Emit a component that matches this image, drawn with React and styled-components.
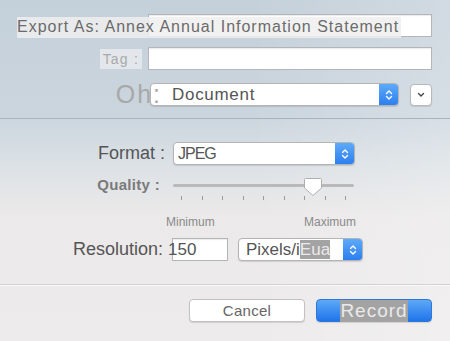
import React from 'react'
import styled, {createGlobalStyle} from 'styled-components'

const Global = createGlobalStyle`
  body {
    margin: 0;
    font-family: "Liberation Sans", Arial, sans-serif;
  }
`

const Dialog = styled.div`
  width: 450px;
  height: 341px;
  overflow: hidden;
  background:
    linear-gradient(to right, rgba(255,255,255,0) 55%, rgba(255,255,255,0.22) 100%),
    linear-gradient(to bottom, #c4d0da 0, #cbd5de 118px, #cdd7df 121px, #dde2e6 170px, #ebe9e9 215px, #edebeb 341px);
`

const TopSection = styled.div`
  height: 119px;
  box-sizing: border-box;
  padding-top: 14px;
  display: flex;
  flex-direction: column;
  gap: 10px;
  border-bottom: 1px solid #a7b3bd;
`

const Row = styled.div`
  position: relative;
  display: flex;
  align-items: center;
  height: 23px;
  margin-top: ${p => p.$offset || 0}px;
`

const TextField = styled.div`
  box-sizing: border-box;
  width: ${p => p.$width}px;
  height: ${p => p.$height || 23}px;
  margin-left: ${p => p.$left || 0}px;
  background: #fff;
  border: 1px solid #b3b6b9;
  box-shadow: inset 0 1px 1px rgba(0,0,0,0.08);
  display: flex;
  align-items: center;
  font-size: 16px;
  color: #555;
`

const OverlayLabel = styled.span`
  position: absolute;
  left: 17px;
  top: 3px;
  padding: 1px 0 2px;
  width: 384px;
  background: rgba(238,238,238,0.85);
  color: #6b6b6b;
  font-size: 16px;
  letter-spacing: 1px;
  white-space: nowrap;
  overflow: hidden;
`

const LabelCell = styled.div`
  width: ${p => p.$width}px;
  flex-shrink: 0;
  display: flex;
  justify-content: flex-end;
  padding-right: ${p => p.$pad || 0}px;
  box-sizing: border-box;
`

const FaintLabel = styled.span`
  background: rgba(230,233,236,0.9);
  color: #a9a9a9;
  font-size: 14px;
  padding: 2px 3px;
  letter-spacing: 1.2px;
`

const BigLabel = styled.span`
  position: relative;
  z-index: 1;
  margin-right: -12px;
  color: #a8a8a8;
  font-size: 25px;
  line-height: 23px;
  letter-spacing: 2px;
`

const Popup = styled.div`
  box-sizing: border-box;
  display: flex;
  align-items: center;
  width: ${p => p.$width}px;
  height: 23px;
  margin-left: ${p => p.$left || 0}px;
  background: #fff;
  border: 1px solid #b4b4b4;
  border-radius: 4px;
  box-shadow: 0 1px 1px rgba(0,0,0,0.12);
  overflow: hidden;
`

const PopupText = styled.span`
  flex: 1;
  padding-left: ${p => p.$pad || 6}px;
  color: #555;
  font-size: ${p => p.$size || 16}px;
  letter-spacing: ${p => p.$spacing || 0}px;
  white-space: nowrap;
`

const Highlight = styled.span`
  background: #a3a3a3;
  color: #eaeaea;
`

const Stepper = styled.div`
  width: 19px;
  align-self: stretch;
  background: linear-gradient(to bottom, #5eaaf9, #2c7ff0);
  display: flex;
  align-items: center;
  justify-content: center;
`

const SmallButton = styled.div`
  box-sizing: border-box;
  width: 22px;
  height: 22px;
  margin-left: 11px;
  background: #fff;
  border: 1px solid #b8b8b8;
  border-radius: 4px;
  box-shadow: 0 1px 1px rgba(0,0,0,0.1);
  display: flex;
  align-items: center;
  justify-content: center;
`

const MiddleSection = styled.div`
  height: 166px;
  box-sizing: border-box;
  padding-top: 23px;
  border-bottom: 1px solid #d2d2d2;
  box-shadow: 0 1px 0 #f9f9f9;
`

const FormLabel = styled.span`
  color: ${p => p.$color || '#555'};
  font-size: ${p => p.$size}px;
  font-weight: ${p => p.$weight || 400};
  letter-spacing: ${p => p.$spacing || 0}px;
  white-space: nowrap;
`

const SliderRow = styled.div`
  display: flex;
  align-items: flex-start;
  margin-top: 11px;
  height: 26px;
`

const SliderBox = styled.div`
  position: relative;
  width: 181px;
  height: 26px;
  margin-left: 13px;
`

const Track = styled.div`
  position: absolute;
  left: 0;
  right: 0;
  top: 8px;
  height: 3px;
  border-radius: 2px;
  background: #b9b9b9;
`

const Ticks = styled.div`
  position: absolute;
  left: 8px;
  right: 8px;
  top: 20px;
  display: flex;
  justify-content: space-between;
`

const Tick = styled.span`
  width: 1px;
  height: 4px;
  background: #9a9a9a;
`

const Thumb = styled.svg`
  position: absolute;
  top: 1px;
`

const ScaleLabels = styled.div`
  display: flex;
  justify-content: space-between;
  width: 190px;
  margin: 13px 0 0 166px;
  font-size: 12px;
  color: #8a8a8a;
`

const Value = styled.span`
  margin-left: -5px;
  font-size: 17px;
  color: #555;
`

const BottomSection = styled.div`
  display: flex;
  justify-content: flex-end;
  gap: 11px;
  padding: 14px 18px 0 0;
`

const Button = styled.div`
  box-sizing: border-box;
  width: 116px;
  height: 23px;
  border-radius: 4px;
  display: flex;
  align-items: center;
  justify-content: center;
  border: 1px solid ${p => p.$primary ? '#2f78d8' : '#c2c2c2'};
  background: ${p => p.$primary ? 'linear-gradient(to bottom, #5ea9f7, #1f74ea)' : '#fff'};
  box-shadow: 0 1px 1px rgba(0,0,0,0.12);
  color: #666;
  font-size: ${p => p.$primary ? 19 : 15}px;
  letter-spacing: ${p => p.$primary ? 1 : 0.3}px;
`

const Chevrons = () => (
  <svg width="8" height="12" viewBox="0 0 8 12">
    <path d="M1.5 4.5 L4 2 L6.5 4.5 M1.5 7.5 L4 10 L6.5 7.5" fill="none" stroke="#fff" strokeWidth="1.4" strokeLinecap="round" strokeLinejoin="round" />
  </svg>
)

const App = () => {
  return (
    <Dialog>
      <Global />
      <TopSection>
        <Row>
          <TextField $width={284} $left={148} />
          <OverlayLabel>Export As: Annex Annual Information Statement</OverlayLabel>
        </Row>
        <Row>
          <LabelCell $width={148} $pad={6}>
            <FaintLabel>Tag :</FaintLabel>
          </LabelCell>
          <TextField $width={284} />
        </Row>
        <Row $offset={3}>
          <LabelCell $width={150}>
            <BigLabel>Oh:</BigLabel>
          </LabelCell>
          <Popup $width={249}>
            <PopupText $pad={21} $size={17} $spacing={0.7}>Document</PopupText>
            <Stepper><Chevrons /></Stepper>
          </Popup>
          <SmallButton>
            <svg width="8" height="6" viewBox="0 0 8 6">
              <path d="M1.5 1.5 L4 4 L6.5 1.5" fill="none" stroke="#444" strokeWidth="1.4" strokeLinecap="round" strokeLinejoin="round" />
            </svg>
          </SmallButton>
        </Row>
      </TopSection>

      <MiddleSection>
        <Row>
          <LabelCell $width={165}>
            <FormLabel $size={18}>Format :</FormLabel>
          </LabelCell>
          <Popup $width={182} $left={8}>
            <PopupText $pad={4} $size={16} $spacing={-1}>JPEG</PopupText>
            <Stepper><Chevrons /></Stepper>
          </Popup>
        </Row>
        <SliderRow>
          <LabelCell $width={160}>
            <FormLabel $size={15} $color="#7a7a7a" $weight={700} $spacing={0.3}>Quality :</FormLabel>
          </LabelCell>
          <SliderBox>
            <Track />
            <Ticks>
              {Array.from({length: 9}).map((_, i) => <Tick key={i} />)}
            </Ticks>
            <Thumb width="20" height="20" viewBox="0 0 20 20" style={{left: 130}}>
              <path d="M2.5 1.5 H17.5 Q18.5 1.5 18.5 2.5 V11 L10 18.5 L1.5 11 V2.5 Q1.5 1.5 2.5 1.5 Z" fill="#fff" stroke="#b0b0b0" strokeWidth="1" />
            </Thumb>
          </SliderBox>
        </SliderRow>
        <ScaleLabels>
          <span>Minimum</span>
          <span>Maximum</span>
        </ScaleLabels>
        <Row $offset={9}>
          <LabelCell $width={172} $pad={9}>
            <FormLabel $size={18}>Resolution:</FormLabel>
          </LabelCell>
          <TextField $width={56}>
            <Value>150</Value>
          </TextField>
          <Popup $width={125} $left={10}>
            <PopupText $pad={7} $size={17}>Pixels/i<Highlight>Eua</Highlight></PopupText>
            <Stepper><Chevrons /></Stepper>
          </Popup>
        </Row>
      </MiddleSection>

      <BottomSection>
        <Button>Cancel</Button>
        <Button $primary><Highlight>Record</Highlight></Button>
      </BottomSection>
    </Dialog>
  )
}

export default App
